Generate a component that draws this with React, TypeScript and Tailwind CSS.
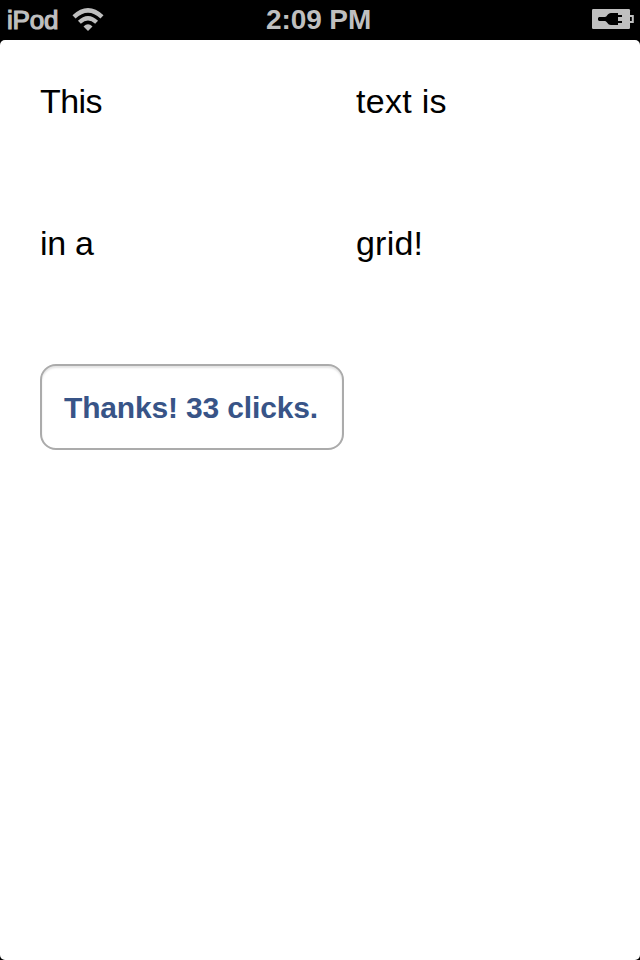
function WifiIcon() {
  return (
    <svg width="32" height="24" viewBox="0 0 32 24" fill="none" className="mt-[7px]">
      <path d="M2 9.9Q16 -3.1 30 9.9" stroke="#bfbfbf" strokeWidth="4.5" />
      <path d="M7.4 15.3Q16 7.3 24.6 15.3" stroke="#bfbfbf" strokeWidth="4.2" />
      <path d="M11.5 19.6Q16 14.8 20.5 19.6L16 24Z" fill="#bfbfbf" />
    </svg>
  );
}

function BatteryIcon() {
  return (
    <svg width="42" height="20" viewBox="0 0 42 20" className="mt-[9px]">
      <rect width="38" height="20" rx="1.3" fill="#bfbfbf" />
      <path d="M38 7H40.8V13H38" fill="none" stroke="#bfbfbf" strokeWidth="2" />
      <path
        d="M7 8H13C15 8 15.5 4 19 4H26V6H30V8H26V12H30V14H26V16H19C15.5 16 15 12 13 12H7L6 11V9Z"
        fill="#000"
      />
    </svg>
  );
}

export default function App() {
  return (
    <div className="flex h-[960px] w-[640px] flex-col overflow-hidden bg-black font-['Liberation_Sans',sans-serif]">
      <header className="grid h-10 shrink-0 grid-cols-[260px_116px_1fr] text-[26px] leading-10 font-bold text-[#bfbfbf]">
        <div className="flex pl-[7px]">
          <span className="w-[65px] font-normal tracking-[-0.2px] [-webkit-text-stroke:1.2px_#bfbfbf]">iPod</span>
          <WifiIcon />
        </div>
        <span className="pl-[6px] text-[28px] leading-10 whitespace-nowrap tracking-[-0.1px]">2:09 PM</span>
        <div className="flex justify-end pr-[6px]">
          <BatteryIcon />
        </div>
      </header>
      <main className="flex-1 rounded-[5px] bg-white px-10 pt-10">
        <div className="grid grid-cols-[316px_1fr] grid-rows-[142px_142px] text-[34px] leading-[42px] text-black">
          <span className="tracking-[-0.6px]">This</span>
          <span className="tracking-[0.3px]">text is</span>
          <span className="tracking-[-0.3px]">in a</span>
          <span className="tracking-[0.2px]">grid!</span>
        </div>
        <button className="block h-[86px] w-[304px] rounded-[16px] border-2 border-[#ababab] bg-white pl-[22px] text-left text-[30px] font-bold tracking-[-0.16px] whitespace-nowrap text-[#385487] shadow-[inset_0_2px_2px_#e4e4e4]">
          Thanks! 33 clicks.
        </button>
      </main>
    </div>
  );
}
